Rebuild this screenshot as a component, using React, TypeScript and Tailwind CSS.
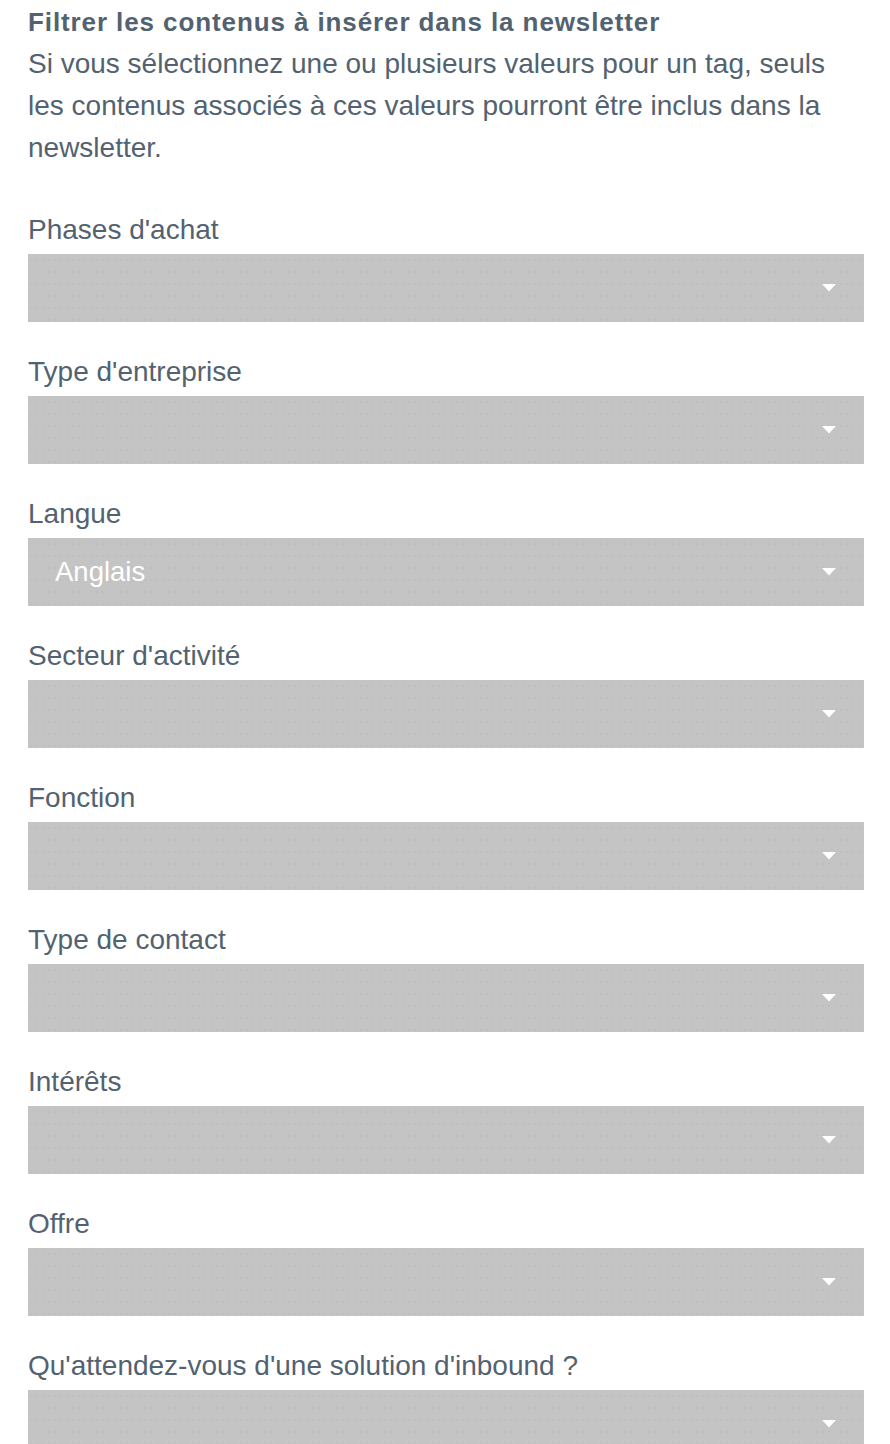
import React from "react";

const fields: { label: string; value?: string }[] = [
  { label: "Phases d'achat" },
  { label: "Type d'entreprise" },
  { label: "Langue", value: "Anglais" },
  { label: "Secteur d'activité" },
  { label: "Fonction" },
  { label: "Type de contact" },
  { label: "Intérêts" },
  { label: "Offre" },
  { label: "Qu'attendez-vous d'une solution d'inbound ?" },
];

function Caret() {
  return (
    <svg width="14" height="8" viewBox="0 0 14 8" className="shrink-0">
      <path d="M0 0 H14 L7 7.5 Z" fill="#ffffff" />
    </svg>
  );
}

export default function App() {
  return (
    <div
      className="w-[890px] h-[1444px] overflow-hidden bg-white text-[#536270] px-[28px] pr-[26px]"
      style={{ fontFamily: '"Liberation Sans", Arial, sans-serif' }}
    >
      <div className="leading-[42px] pt-[1px]">
        <div className="font-bold text-[26px] tracking-[0.9px]">Filtrer les contenus à insérer dans la newsletter</div>
        <div className="text-[28px] w-[812px]">
          Si vous sélectionnez une ou plusieurs valeurs pour un tag, seuls les contenus associés à ces valeurs
          pourront être inclus dans la newsletter.
        </div>
      </div>
      <div className="mt-[43px] flex flex-col gap-[32px]">
        {fields.map((f) => (
          <div key={f.label} className="flex flex-col">
            <div className="text-[28px] leading-[36px] h-[36px]">{f.label}</div>
            <div className="mt-[6px] h-[68px] bg-[#c4c4c4] bg-[radial-gradient(circle,#bdbdbd_0.6px,transparent_1px)] bg-[length:6px_12px] flex items-center pl-[27px] pr-[28px]">
              <div className="flex-1 text-white text-[27.5px]">{f.value ?? ""}</div>
              <Caret />
            </div>
          </div>
        ))}
      </div>
    </div>
  );
}
